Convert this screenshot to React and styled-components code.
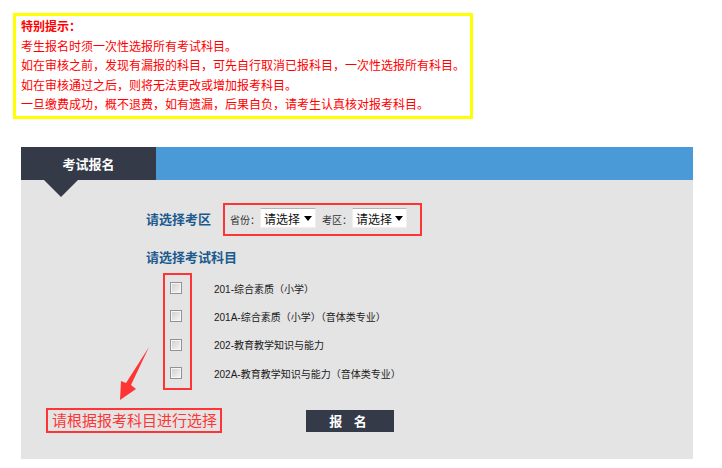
import React from 'react';
import styled, { createGlobalStyle } from 'styled-components';

const GlobalStyle = createGlobalStyle`
  html, body {
    margin: 0;
    padding: 0;
    background: #fff;
  }
  body {
    font-family: "Liberation Sans", "Noto Sans CJK SC", sans-serif;
  }
`

const Page = styled.div`
  padding: 13px 0 0 13px;
`

const Notice = styled.div`
  box-sizing: border-box;
  width: 460px;
  height: 106px;
  border: 3px solid #ffff00;
  padding: 2px 0 0 5px;
  color: #ff0000;
  font-size: 12px;
  line-height: 19.5px;
`

const NoticeTitle = styled.div`
  font-weight: bold;
`

const Panel = styled.div`
  width: 672px;
  margin: 28px 0 0 8px;
`

const Header = styled.div`
  display: flex;
  height: 33px;
  background: #4b9ad8;
`

const Tab = styled.div`
  position: relative;
  width: 135px;
  display: flex;
  align-items: center;
  justify-content: center;
  background: #343a48;
  color: #fff;
  font-size: 13px;
  font-weight: bold;

  &::after {
    content: "";
    position: absolute;
    top: 100%;
    left: 23px;
    border-left: 17px solid transparent;
    border-right: 17px solid transparent;
    border-top: 17px solid #343a48;
    z-index: 1;
  }
`

const Body = styled.div`
  position: relative;
  background: #e4e4e4;
  padding: 23px 0 26px 25px;
`

const FormArea = styled.div`
  margin-left: 100px;
`

const Row = styled.div`
  display: flex;
  align-items: center;
`

const SectionLabel = styled.div`
  color: #1b5a8e;
  font-size: 13px;
  font-weight: bold;
  line-height: 20px;
  margin-top: ${p => p.$top || 0}px;
`

const RegionBox = styled.div`
  box-sizing: border-box;
  height: 33px;
  margin-left: 12px;
  display: flex;
  align-items: center;
  padding: 0 13px 0 5px;
  border: 2px solid #ff3535;
`

const SmallLabel = styled.span`
  width: 30px;
  font-size: 10px;
  color: #333;
  margin-left: ${p => p.$gap || 0}px;
`

const FakeSelect = styled.div`
  box-sizing: border-box;
  width: ${p => p.$w}px;
  height: 20px;
  margin-top: -3px;
  display: flex;
  align-items: center;
  justify-content: space-between;
  padding: 0 3px 0 3px;
  background: #fff;
  border: 1px solid #eee;
  border-top-color: #b5b5b5;
  font-size: 12px;
  color: #111;
`

const Caret = styled.span`
  width: 0;
  height: 0;
  border-left: 4px solid transparent;
  border-right: 4px solid transparent;
  border-top: 5px solid #000;
`

const SubjectList = styled.div`
  position: relative;
  margin-top: 5px;
  padding: 1px 0 3px;
`

const Highlight = styled.div`
  position: absolute;
  top: 0;
  left: 17px;
  width: 29px;
  height: 100%;
  box-sizing: border-box;
  border: 2px solid #ff3535;
  pointer-events: none;
`

const SubjectRow = styled.label`
  height: 28.33px;
  display: flex;
  align-items: center;
  font-size: 10px;
  color: #1a1a1a;
`

const Check = styled.input`
  appearance: none;
  margin: 0 32px 0 24px;
  width: 12px;
  height: 12px;
  border: 1px solid #929292;
  box-shadow: inset 0 0 0 1px #f6f6f6;
  background: linear-gradient(135deg, #cdcdcd, #f8f8f8);
`

const Footer = styled.div`
  margin-top: 18px;
  display: flex;
  align-items: center;
`

const Hint = styled.div`
  box-sizing: border-box;
  height: 25px;
  padding: 0 3px 0 4px;
  border: 2px solid #ff3535;
  color: #ff3535;
  font-size: 15px;
  line-height: 21px;
`

const SubmitButton = styled.button`
  margin-left: 84px;
  width: 88px;
  height: 22px;
  border: none;
  background: #343a48;
  color: #fff;
  font-family: inherit;
  font-size: 13px;
  font-weight: bold;
  letter-spacing: 4px;
  cursor: pointer;
`

const Arrow = styled.svg`
  position: absolute;
  left: 94px;
  top: 165px;
`

const notices = [
  '考生报名时须一次性选报所有考试科目。',
  '如在审核之前，发现有漏报的科目，可先自行取消已报科目，一次性选报所有科目。',
  '如在审核通过之后，则将无法更改或增加报考科目。',
  '一旦缴费成功，概不退费，如有遗漏，后果自负，请考生认真核对报考科目。',
]

const subjects = [
  '201-综合素质（小学）',
  '201A-综合素质（小学）（音体类专业）',
  '202-教育教学知识与能力',
  '202A-教育教学知识与能力（音体类专业）',
]

export default function App() {
  return (
    <Page>
      <GlobalStyle />
      <Notice>
        <NoticeTitle>特别提示：</NoticeTitle>
        {notices.map(n => <div key={n}>{n}</div>)}
      </Notice>

      <Panel>
        <Header>
          <Tab>考试报名</Tab>
        </Header>
        <Body>
          <FormArea>
            <Row>
              <SectionLabel>请选择考区</SectionLabel>
              <RegionBox>
                <SmallLabel>省份：</SmallLabel>
                <FakeSelect $w={56}>请选择<Caret /></FakeSelect>
                <SmallLabel $gap={6}>考区：</SmallLabel>
                <FakeSelect $w={55}>请选择<Caret /></FakeSelect>
              </RegionBox>
            </Row>
            <SectionLabel $top={12}>请选择考试科目</SectionLabel>
            <SubjectList>
              <Highlight />
              {subjects.map(s => (
                <SubjectRow key={s}>
                  <Check type="checkbox" />
                  {s}
                </SubjectRow>
              ))}
            </SubjectList>
          </FormArea>
          <Footer>
            <Hint>请根据报考科目进行选择</Hint>
            <SubmitButton>报 名</SubmitButton>
          </Footer>
          <Arrow width="40" height="60" viewBox="0 0 40 60">
            <polygon points="34,2 16,40 21,44 5,55 6,36 11,38" fill="#ff3535" />
          </Arrow>
        </Body>
      </Panel>
    </Page>
  );
}
